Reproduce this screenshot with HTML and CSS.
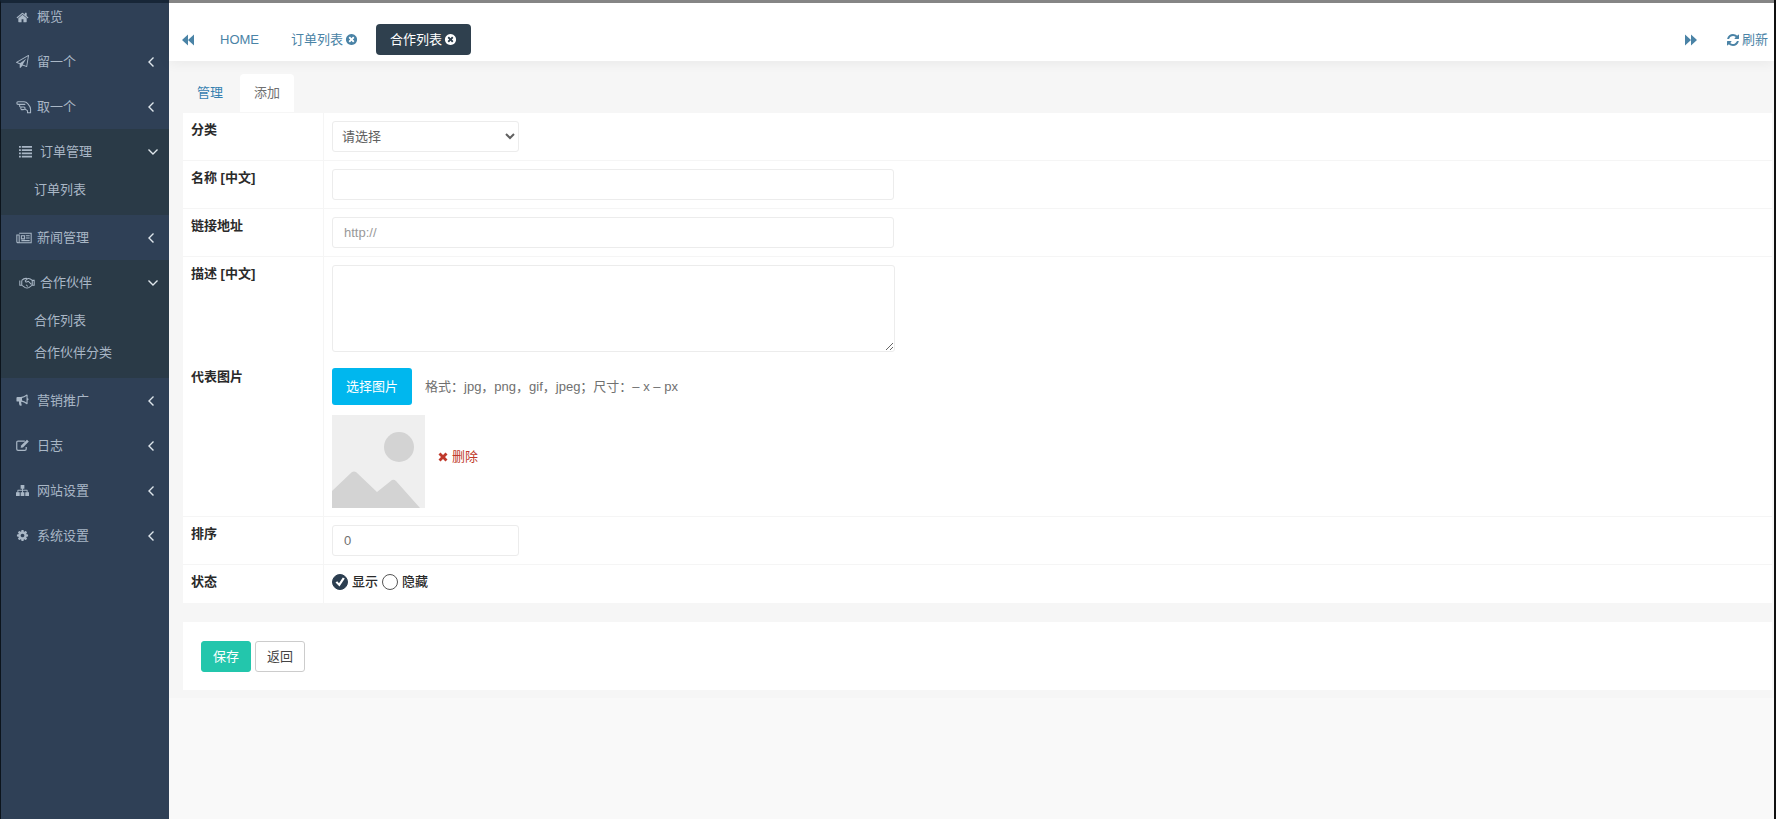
FILE: index.html
```html
<!DOCTYPE html>
<html lang="zh-CN">
<head>
<meta charset="utf-8">
<title>合作列表</title>
<link rel="stylesheet" href="styles.css">
</head>
<body>
<svg class="sprite" aria-hidden="true">
  <symbol id="left" viewBox="0 0 8 12"><path d="M6.500 1.500 2 6l4.500 4.500" fill="none" stroke="currentColor" stroke-width="1.400"/></symbol>
  <symbol id="down" viewBox="0 0 12 8"><path d="M1.500 1.500 6 6l4.500-4.500" fill="none" stroke="currentColor" stroke-width="1.400"/></symbol>
  <symbol id="close" viewBox="0 0 1792 1792"><path d="M1277 1122q0-26-19-45l-181-181 181-181q19-19 19-45 0-27-19-46l-90-90q-19-19-46-19-26 0-45 19l-181 181-181-181q-19-19-45-19-27 0-46 19l-90 90q-19 19-19 46 0 26 19 45l181 181-181 181q-19 19-19 45 0 27 19 46l90 90q19 19 46 19 26 0 45-19l181-181 181 181q19 19 45 19 27 0 46-19l90-90q19-19 19-46zm387-226q0 209-103 385.500t-279.500 279.500-385.500 103-385.500-103-279.500-279.500-103-385.500 103-385.500 279.500-279.500 385.500-103 385.500 103 279.500 279.500 103 385.500z"/></symbol>
</svg>
<div class="app">
  <nav class="sidebar">
    <a class="item item-first" href="#"><svg class="icon" viewBox="0 0 1792 1792"><path d="M1472 992v480q0 26-19 45t-45 19h-384v-384h-256v384h-384q-26 0-45-19t-19-45v-480q0-1 .5-3t.5-3l575-474 575 474q1 2 1 6zm223-69l-62 74q-8 9-21 11h-3q-13 0-21-7l-692-577-692 577q-12 8-24 7-13-2-21-11l-62-74q-8-10-7-23.500t11-21.500l719-599q32-26 76-26t76 26l244 204v-195q0-14 9-23t23-9h192q14 0 23 9t9 23v408l219 182q10 8 11 21.500t-7 23.500z"/></svg><span>概览</span></a>
    <a class="item" href="#"><svg class="icon" viewBox="0 0 1792 1792"><path d="M1764 11q33 24 27 64l-256 1536q-5 29-32 45-14 8-31 8-11 0-24-5l-527-215-298 327q-18 21-47 21-14 0-23-4-19-7-30-23.500t-11-36.500v-452l-472-193q-37-14-40-55-3-39 32-59l1664-960q35-21 68 2zm-342 1499l221-1323-1434 827 336 137 863-639-478 797z"/></svg><span>留一个</span><svg class="arrow-left"><use href="#left"/></svg></a>
    <a class="item" href="#"><svg class="icon icon-wide line" viewBox="0 0 18 16"><path d="M7 5H2.200Q.8 5 .8 3.500T2.200 2H9q2.500 0 4.500 2.500 3 3.500 3 6v4h-3.500v-2.300L9.500 10M7 5h3.500M4.500 5Q3 8 5.500 8H9q1.500.5 1.200 1.500Q9.800 11 8 11H6Q5 10.500 5.500 8"/></svg><span>取一个</span><svg class="arrow-left"><use href="#left"/></svg></a>
    <div class="group">
      <a class="item" href="#"><svg class="icon" viewBox="0 0 14 14"><path d="M0 1h2v2H0zm3 0h11v2H3zM0 4.500h2v2H0zm3 0h11v2H3zM0 8h2v2H0zm3 0h11v2H3zM0 11.500h2v2H0zm3 0h11v2H3z"/></svg><span>订单管理</span><svg class="arrow-down"><use href="#down"/></svg></a>
      <a class="sub" href="#">订单列表</a>
    </div>
    <a class="item" href="#"><svg class="icon icon-wide line" viewBox="0 0 18 16"><path d="M3.500 2.500h13.700v11H2.500Q.8 13.500.8 12V4.500h2.700V12q0 1.500-1 1.500"/><path d="M6 5.500h3.500V9H6zM11 5.500h4.500M11 8h4.500M6 11h9.500"/></svg><span>新闻管理</span><svg class="arrow-left"><use href="#left"/></svg></a>
    <div class="group">
      <a class="item" href="#"><svg class="icon icon-wide line" viewBox="0 0 18 16"><path d="M.8 5v5.500H3L6.500 13q2.500 1.500 5 0l3.500-2.500h2.200V5H15q-2.500-2.500-5-2.200L7 5.500q.5 2 2.300 1L10.500 6 14 9.500M3 5q2.500-2.700 6-2.200M3 5v5.500M15 5v5.500M8 10l2 2"/></svg><span>合作伙伴</span><svg class="arrow-down"><use href="#down"/></svg></a>
      <a class="sub" href="#">合作列表</a>
      <a class="sub" href="#">合作伙伴分类</a>
    </div>
    <a class="item" href="#"><svg class="icon" viewBox="0 0 14 14"><path fill-rule="evenodd" d="M12.500 1v3.500q1 .2 1 1.200t-1 1.200v3.700q-.2.700-1 .4Q8.500 8.500 6 8.300q-1 .7-.2 1.700-.5 1 .7 1.900-.8 1.100-2.500.6Q3 10.500 3.200 8.200H1.500Q.5 8.200.5 7.200v-3Q.5 3.200 1.500 3.200H5Q8.500 3 11.500.5q.7-.2 1 .5zm-1.200 1.200Q9 4 6.500 4.300V7q2.500.4 4.800 2.200z"/></svg><span>营销推广</span><svg class="arrow-left"><use href="#left"/></svg></a>
    <a class="item" href="#"><svg class="icon" viewBox="0 0 14 14"><path d="M9.500 2.200H2.200Q.8 2.200.8 3.700v7q0 1.500 1.400 1.500h7.300q1.500 0 1.500-1.500V8.500" fill="none" stroke="currentColor" stroke-width="1.300"/><path d="M11.800.8 13.800 2.800 7.500 9.200 5 9.500l.5-2.500z"/></svg><span>日志</span><svg class="arrow-left"><use href="#left"/></svg></a>
    <a class="item" href="#"><svg class="icon" viewBox="0 0 14 14"><path d="M5 1h4v4H7.500v1.300H12q.5 0 .5.500V9H14v4h-4V9h1.500V7.400h-4V9H9v4H5V9h1.500V7.400h-4V9H4v4H0V9h1.500V6.800q0-.5.500-.5h4.500V5H5z"/></svg><span>网站设置</span><svg class="arrow-left"><use href="#left"/></svg></a>
    <a class="item" href="#"><svg class="icon" viewBox="0 0 1792 1792"><path d="M1152 896q0-106-75-181t-181-75-181 75-75 181 75 181 181 75 181-75 75-181zm512-109v222q0 12-8 23t-20 13l-185 28q-19 54-39 91 35 50 107 138 10 12 10 25t-9 23q-27 37-99 108t-94 71q-12 0-26-9l-138-108q-44 23-91 38-16 136-29 186-7 28-36 28h-222q-14 0-24.500-8.500t-11.500-21.500l-28-184q-49-16-90-37l-141 107q-10 9-25 9-14 0-25-11-126-114-165-168-7-10-7-23 0-12 8-23 15-21 51-66.500t54-70.500q-27-50-41-99l-183-27q-13-2-21-12.500t-8-23.500v-222q0-12 8-23t19-13l186-28q14-46 39-92-40-57-107-138-10-12-10-24 0-10 9-23 26-36 98.500-107.500t94.500-71.500q13 0 26 10l138 107q44-23 91-38 16-136 29-186 7-28 36-28h222q14 0 24.500 8.500t11.500 21.500l28 184q49 16 90 37l142-107q9-9 24-9 13 0 25 10 129 119 165 170 7 8 7 22 0 12-8 23-15 21-51 66.500t-54 70.500q26 50 41 98l183 28q13 2 21 12.500t8 23.500z"/></svg><span>系统设置</span><svg class="arrow-left"><use href="#left"/></svg></a>
  </nav>

  <div class="main">
    <header class="topbar">
      <button class="scroll" type="button" aria-label="向左"><svg class="fast" viewBox="0 0 12 12"><path d="M6 .5v11L0 6zM12 .5v11L6 6z"/></svg></button>
      <nav class="pages">
        <a class="page" href="#">HOME</a>
        <a class="page" href="#">订单列表<svg class="close"><use href="#close"/></svg></a>
        <a class="page page-active" href="#">合作列表<svg class="close"><use href="#close"/></svg></a>
      </nav>
      <button class="scroll" type="button" aria-label="向右"><svg class="fast" viewBox="0 0 12 12"><path d="M0 .5v11L6 6zM6 .5v11L12 6z"/></svg></button>
      <a class="refresh" href="#"><svg viewBox="0 0 1792 1792"><path d="M1639 1056q0 5-1 7-64 268-268 434.500t-478 166.500q-146 0-282.500-55t-243.500-157l-129 129q-19 19-45 19t-45-19-19-45v-448q0-26 19-45t45-19h448q26 0 45 19t19 45-19 45l-137 137q71 66 161 102t187 36q134 0 250-65t186-179q11-17 53-117 8-23 30-23h192q13 0 22.500 9.500t9.500 22.500zm25-800v448q0 26-19 45t-45 19h-448q-26 0-45-19t-19-45 19-45l138-138q-148-137-349-137-134 0-250 65t-186 179q-11 17-53 117-8 23-30 23h-199q-13 0-22.500-9.500t-9.500-22.500v-7q65-268 270-434.500t480-166.500q146 0 284 55.500t245 156.500l130-129q19-19 45-19t45 19 19 45z"/></svg>刷新</a>
    </header>

    <main class="content">
      <nav class="tabs">
        <a class="tab" href="#">管理</a>
        <a class="tab tab-active" href="#">添加</a>
      </nav>
      <form>
        <div class="panel">
          <div class="row">
            <label class="label" for="cat">分类</label>
            <div class="field"><select class="control short" id="cat"><option>请选择</option></select></div>
          </div>
          <div class="row">
            <label class="label" for="name">名称 [中文]</label>
            <div class="field"><input class="control" id="name" type="text"></div>
          </div>
          <div class="row">
            <label class="label" for="url">链接地址</label>
            <div class="field"><input class="control" id="url" type="text" placeholder="http://"></div>
          </div>
          <div class="row row-open">
            <label class="label" for="desc">描述 [中文]</label>
            <div class="field"><textarea class="control area" id="desc"></textarea></div>
          </div>
          <div class="row">
            <label class="label" for="pick">代表图片</label>
            <div class="field upload">
              <div class="line-up"><button class="pick" id="pick" type="button">选择图片</button><span class="hint">格式：jpg，png，gif，jpeg；尺寸：– x – px</span></div>
              <div class="line-up">
                <svg class="thumb" viewBox="0 0 93 93" role="img" aria-label="图片"><path fill="#efefef" d="M0 0h93v93H0z"/><circle cx="67" cy="32" r="15" fill="#d3d3d3"/><path fill="#d3d3d3" d="M0 76 20 57q2-1 4 0l21 20 15-12q2-1 4 1l24 27H0z"/></svg>
                <a class="remove" href="#"><svg viewBox="0 0 10 10"><path d="M2.500.5 5 3 7.500.5l2 2L7 5l2.500 2.500-2 2L5 7 2.500 9.500l-2-2L3 5 .5 2.500z"/></svg>删除</a>
              </div>
            </div>
          </div>
          <div class="row">
            <label class="label" for="sort">排序</label>
            <div class="field"><input class="control short" id="sort" type="text" value="0"></div>
          </div>
          <div class="row row-open" role="radiogroup" aria-labelledby="state">
            <span class="label" id="state">状态</span>
            <div class="field radios">
              <label class="choice"><input type="radio" name="state" checked>显示</label>
              <label class="choice"><input type="radio" name="state">隐藏</label>
            </div>
          </div>
        </div>
        <div class="actions">
          <button class="btn save" type="submit">保存</button>
          <button class="btn" type="button">返回</button>
        </div>
      </form>
    </main>
  </div>
</div>
</body>
</html>
```
FILE: styles.css
```css
* { box-sizing: border-box; }
body {
  margin: 0;
  font: 13px/20px "Liberation Sans", "Noto Sans CJK SC", sans-serif;
  color: #707070;
  background: #f9f9f9;
}
a { color: inherit; text-decoration: none; }
svg { fill: currentColor; flex: none; }
button, input, select, textarea { font: inherit; color: inherit; }
.sprite { display: none; }
.app { display: flex; min-height: 100vh; border-right: 2px solid #111; }

.sidebar {
  flex: none;
  width: 169px;
  border-left: 1px solid #0c141c;
  border-top: 3px solid #172637;
  background: #2f4056;
  color: #a9b7c6;
}
.item { display: flex; align-items: center; height: 45px; padding: 0 14px 0 15px; }
.item span { flex: 1; }
.item-first { height: 28px; margin-bottom: 8px; }
.icon { width: 13px; height: 13px; margin-right: 8px; }
.icon-wide { width: 16px; height: 14px; margin-right: 5px; }
.line { fill: none; stroke: currentColor; stroke-width: 1.200; }
.arrow-left { width: 8px; height: 12px; color: #dfe6ec; }
.arrow-down { width: 12px; height: 8px; color: #dfe6ec; }
.group { padding-bottom: 9px; background: #2a3a47; }
.group .item { padding: 0 10px 0 18px; }
.sub { display: block; padding: 6px 0 6px 33px; }

.main { flex: 1; min-width: 0; }
.topbar {
  position: relative;
  display: flex;
  align-items: flex-start;
  height: 61px;
  padding: 21px 6px 0 13px;
  border-top: 3px solid #858585;
  background: #fff;
  color: #4a83a6;
  box-shadow: 0 2px 12px #0000000f;
}
.scroll { display: flex; align-items: center; height: 31px; padding: 0; border: 0; background: none; }
.fast { width: 12px; height: 12px; }
.pages { display: flex; flex: 1; gap: 4px; margin-left: 12px; }
.page { display: flex; align-items: center; height: 31px; padding: 0 14px; border-radius: 4px; }
.page-active { background: #2f404e; color: #fff; }
.close { width: 13px; height: 13px; margin-left: 2px; }
.refresh { display: flex; align-items: center; gap: 2px; height: 31px; margin-left: 29px; }
.refresh svg { width: 14px; height: 14px; }

.content { padding: 13px 2px 8px 14px; background: #f6f6f6; }
.tabs { display: flex; gap: 3px; }
.tab { padding: 9px 14px; color: #3580b0; }
.tab-active { border-radius: 4px 4px 0 0; background: #fff; color: #707070; }
.panel { margin-top: 1px; background: #fff; }
.row { display: grid; grid-template-columns: 141px 1fr; border-bottom: 1px solid #f5f5f5; }
.row-open { border-bottom: 0; }
.label { padding: 7px 8px; border-right: 1px solid #f5f5f5; color: #2a2a2a; font-weight: 600; }
.field { padding: 8px 8px 7px; }
.control {
  display: block;
  width: 100%;
  max-width: 562px;
  height: 31px;
  margin-bottom: 1px;
  padding: 0 11px;
  border: 1px solid #ececec;
  border-radius: 3px;
  background: #fff;
  outline: none;
}
.control::placeholder { color: #999; }
.short { max-width: 187px; }
select.control { padding: 0 0 0 5px; color: #606060; }
.area { max-width: 563px; height: 87px; }
.upload { display: grid; gap: 10px; padding-bottom: 8px; }
.line-up { display: flex; align-items: center; gap: 13px; }
.pick { height: 37px; padding: 0 14px; border: 0; border-radius: 3px; background: #00b7ee; color: #fff; }
.thumb { width: 93px; height: 93px; }
.remove { display: flex; align-items: center; gap: 4px; margin-top: -10px; color: #c0392b; }
.remove svg { width: 10px; height: 10px; }
.radios { display: flex; gap: 4px; padding: 7px 8px 11px; }
.choice { display: flex; align-items: center; gap: 4px; color: #2a2a2a; font-weight: 500; }
.choice input {
  display: grid;
  place-items: center;
  appearance: none;
  width: 16px;
  height: 16px;
  margin: 0;
  border: 1px solid #555;
  border-radius: 50%;
}
.choice input:checked { border-color: #2c3e50; background: #2c3e50; }
.choice input:checked::after {
  content: "";
  width: 10px;
  height: 10px;
  background: #fff;
  clip-path: polygon(5% 55%, 22% 42%, 40% 62%, 78% 5%, 98% 16%, 45% 95%);
}
.actions { display: flex; gap: 4px; margin-top: 19px; padding: 19px 18px 18px; background: #fff; }
.btn { height: 31px; padding: 0 11px; border: 1px solid #ccc; border-radius: 3px; background: #fff; color: #444; }
.save { border-color: #23c6ac; background: #23c6ac; color: #fff; }
```
